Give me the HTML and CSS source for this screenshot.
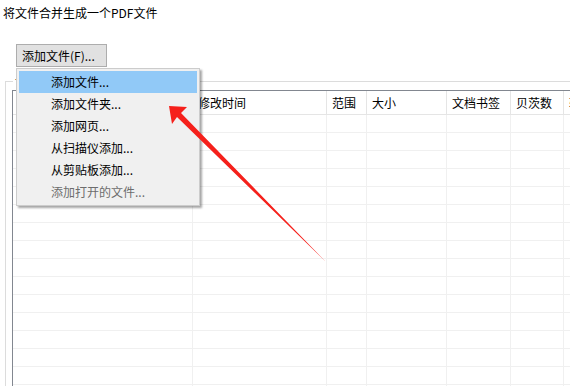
FILE: index.html
```html
<!DOCTYPE html>
<html>
<head>
    <title>合并PDF</title>
    <link rel="stylesheet" href="styles.css">
</head>
<body>
    <div class="title">将文件合并生成一个PDF文件</div>

    <button class="add-btn">添加文件(F)...</button>

    <div class="group">
        <span class="group-label">设置文件</span>
        <div class="listview">
            <div class="lv-row lv-head">
                <div class="c1">文件名</div>
                <div class="c2">修改时间</div>
                <div class="c3">范围</div>
                <div class="c4">大小</div>
                <div class="c5">文档书签</div>
                <div class="c6">贝茨数</div>
                <div class="c7">转换</div>
            </div>
            <div id="rows"></div>
        </div>
    </div>

    <!-- dropdown menu of the add button -->
    <ul class="menu">
        <li class="active">添加文件...</li>
        <li>添加文件夹...</li>
        <li>添加网页...</li>
        <li>从扫描仪添加...</li>
        <li>从剪贴板添加...</li>
        <li class="disabled">添加打开的文件...</li>
    </ul>

    <svg class="arrow" width="570" height="386" viewBox="0 0 570 386">
        <polygon fill="#f5201b" points="169,106 187,107 181,113 326,262 177,117 172,124"/>
    </svg>

    <script>
        // empty grid rows of the list view
        let rows = document.getElementById("rows");
        let html = "";
        for (let i = 0; i < 16; i++) {
            html += `<div class="lv-row">
                <div class="c1"></div><div class="c2"></div><div class="c3"></div>
                <div class="c4"></div><div class="c5"></div><div class="c6"></div><div class="c7"></div>
            </div>`;
        }
        rows.innerHTML = html;
    </script>
</body>
</html>
```

FILE: styles.css
```css
html, body { margin: 0; padding: 0; }
body { width: 570px; height: 386px; overflow: hidden; background: #ffffff; font-family: "Noto Sans CJK SC", "Noto Sans", sans-serif; font-size: 12px; color: #000; position: relative; }

.title { padding: 4px 0 0 3px; height: 18px; line-height: 18px; }

.add-btn { display: block; margin: 22px 0 0 16px; width: 91px; height: 23px; padding: 0 0 0 5px; text-align: left; background: #e1e1e1; border: 1px solid #adadad; font-family: inherit; font-size: 12px; line-height: 20px; color: #000; }

.group { position: relative; margin: 14px 0 0 5px; border-top: 1px solid #dcdcdc; border-left: 1px solid #dcdcdc; padding: 8px 0 0 6px; }
.group-label { position: absolute; left: 7px; top: -9px; background: #fff; padding: 0 2px; line-height: 16px; }

.listview { border-top: 1px solid #828790; border-left: 1px solid #828790; width: 620px; background: #fff; }
.lv-row { display: flex; height: 17px; border-bottom: 1px solid #f0f0f0; }
.lv-row > div { flex: none; border-right: 1px solid #f0f0f0; box-sizing: border-box; padding-left: 5px; white-space: nowrap; overflow: hidden; }
.lv-head { height: 23px; line-height: 24px; border-bottom: 1px solid #e5e5e5; }
.lv-head > div { border-right: 1px solid #e5e5e5; }

.c1 { width: 180px; }
.c2 { width: 134px; }
.c3 { width: 40px; }
.c4 { width: 80px; }
.c5 { width: 64px; }
.c6 { width: 53px; }
.c7 { width: 69px; }

.menu { position: absolute; left: 16px; top: 68px; width: 182px; margin: 0; padding: 2px; list-style: none; background: #f0f0f0; border: 1px solid #cccccc; box-shadow: 2px 2px 2px rgba(0, 0, 0, 0.35); box-sizing: content-box; width: 178px; }
.menu li { height: 22px; line-height: 22px; padding-left: 32px; }
.menu li.active { background: #91c9f7; }
.menu li.disabled { color: #6d6d6d; }

.arrow { position: absolute; left: 0; top: 0; pointer-events: none; }
```
